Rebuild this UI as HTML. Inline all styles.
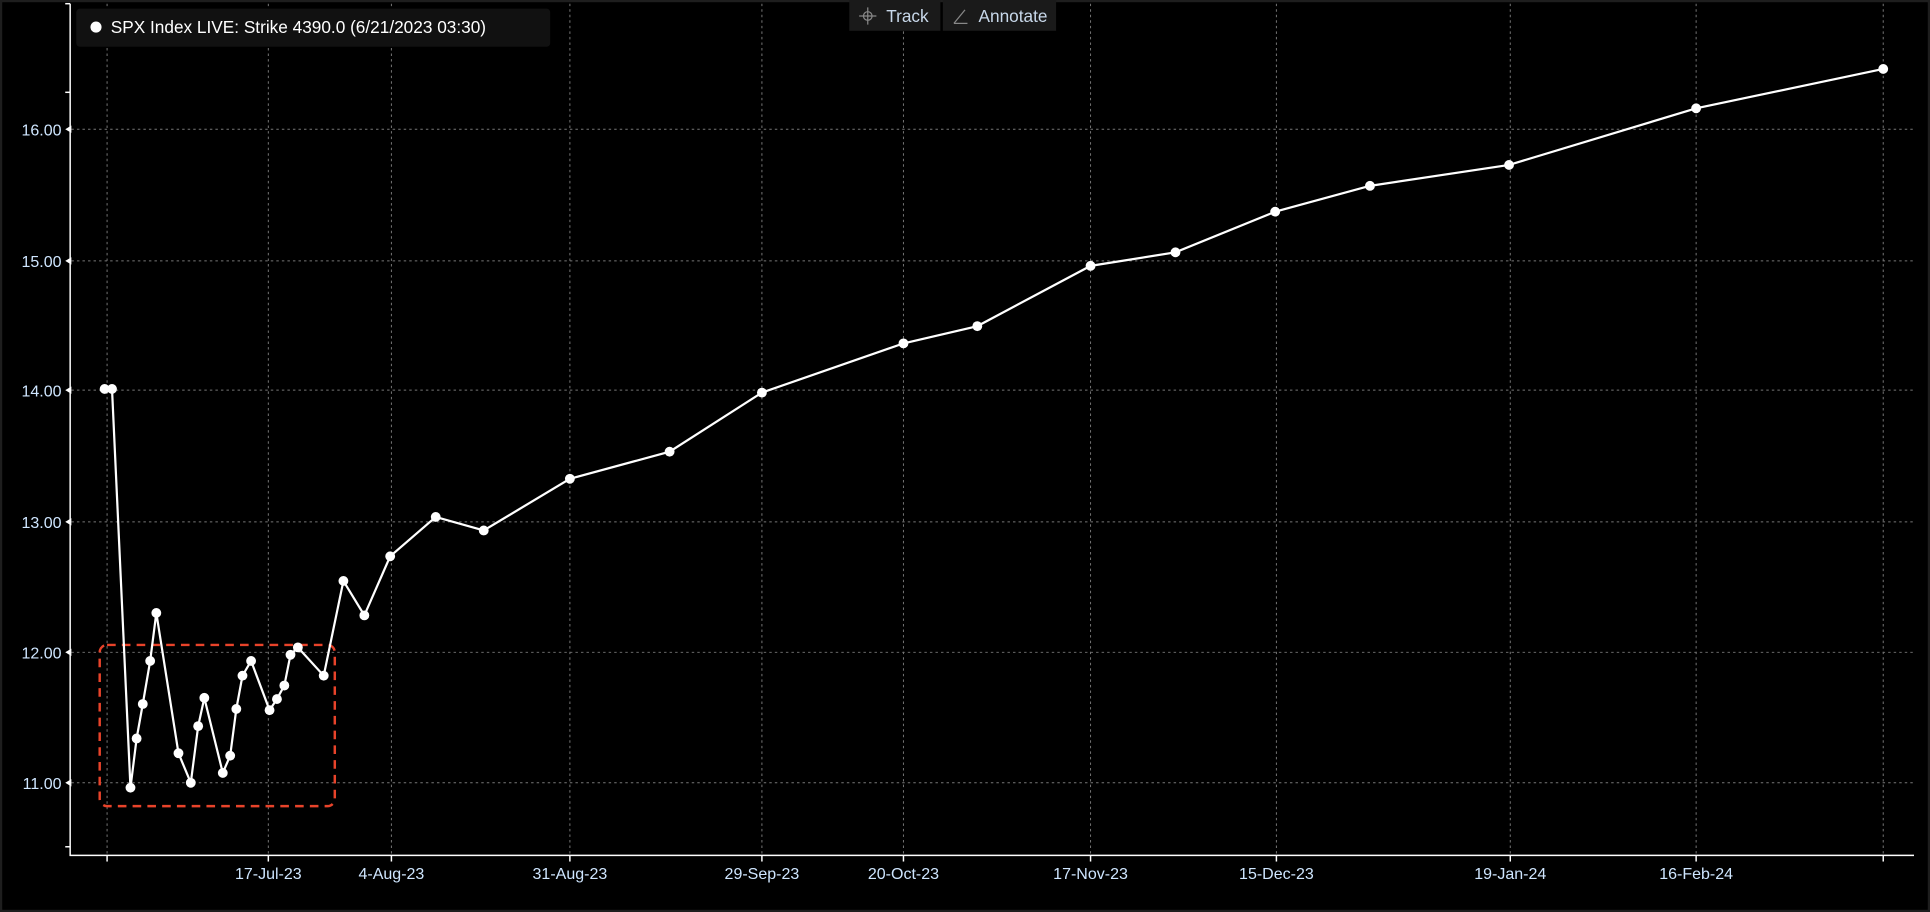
<!DOCTYPE html>
<html><head><meta charset="utf-8"><style>
html,body{margin:0;padding:0;background:#000;width:1930px;height:912px;overflow:hidden}
svg{display:block}
text{font-family:"Liberation Sans Narrow","Liberation Sans",sans-serif}
</style></head><body>
<svg width="1930" height="912" viewBox="0 0 1568 741" preserveAspectRatio="none">
<rect x="0" y="0" width="1568" height="741" fill="#000"/>
<rect x="0.8" y="0.8" width="1566.4" height="739.4" fill="none" stroke="#1e1e1e" stroke-width="2"/>
<g stroke="#777" stroke-width="0.8" stroke-dasharray="2,2.5">
<line x1="58" y1="105" x2="1555" y2="105"/>
<line x1="58" y1="212" x2="1555" y2="212"/>
<line x1="58" y1="317" x2="1555" y2="317"/>
<line x1="58" y1="424" x2="1555" y2="424"/>
<line x1="58" y1="530" x2="1555" y2="530"/>
<line x1="58" y1="636" x2="1555" y2="636"/>
<line x1="87" y1="3" x2="87" y2="695"/>
<line x1="218" y1="3" x2="218" y2="695"/>
<line x1="318" y1="3" x2="318" y2="695"/>
<line x1="463" y1="3" x2="463" y2="695"/>
<line x1="619" y1="3" x2="619" y2="695"/>
<line x1="734" y1="3" x2="734" y2="695"/>
<line x1="886" y1="3" x2="886" y2="695"/>
<line x1="1037" y1="3" x2="1037" y2="695"/>
<line x1="1227" y1="3" x2="1227" y2="695"/>
<line x1="1378" y1="3" x2="1378" y2="695"/>
<line x1="1530" y1="3" x2="1530" y2="695"/>
</g>
<g stroke="#fff" stroke-width="1.2" fill="none">
<polyline points="57,3 57,695 1555,695"/>
<polyline points="53,3 57,3"/><polyline points="53,75 57,75"/><polyline points="53,688 57,688"/>
<polyline points="87,695 87,700"/><polyline points="218,695 218,700"/><polyline points="318,695 318,700"/><polyline points="463,695 463,700"/><polyline points="619,695 619,700"/><polyline points="734,695 734,700"/><polyline points="886,695 886,700"/><polyline points="1037,695 1037,700"/><polyline points="1227,695 1227,700"/><polyline points="1378,695 1378,700"/><polyline points="1530,695 1530,700"/>
</g>
<g fill="#fff">
<polygon points="53,105 58,102 58,108"/><polygon points="53,212 58,209 58,215"/><polygon points="53,317 58,314 58,320"/><polygon points="53,424 58,421 58,427"/><polygon points="53,530 58,527 58,533"/><polygon points="53,636 58,633 58,639"/>
</g>
<g fill="#cfe6ff" font-size="13" text-anchor="end">
<text x="50" y="110">16.00</text><text x="50" y="217">15.00</text><text x="50" y="322">14.00</text><text x="50" y="429">13.00</text><text x="50" y="535">12.00</text><text x="50" y="641">11.00</text>
</g>
<g fill="#cfe6ff" font-size="13" text-anchor="middle">
<text x="218" y="714">17-Jul-23</text><text x="318" y="714">4-Aug-23</text><text x="463" y="714">31-Aug-23</text><text x="619" y="714">29-Sep-23</text><text x="734" y="714">20-Oct-23</text><text x="886" y="714">17-Nov-23</text><text x="1037" y="714">15-Dec-23</text><text x="1227" y="714">19-Jan-24</text><text x="1378" y="714">16-Feb-24</text>
</g>
<rect x="81" y="524" width="191" height="131" rx="6" fill="none" stroke="#e8432a" stroke-width="2" stroke-dasharray="7,5"/>
<polyline fill="none" stroke="#fff" stroke-width="1.8" points="85,316 91,316 106,640 111,600 116,572 122,537 127,498 145,612 155,636 161,590 166,567 181,628 187,614 192,576 197,549 204,537 219,577 225,568 231,557 236,532 242,526 263,549 279,472 296,500 317,452 354,420 393,431 463,389 544,367 619,319 734,279 794,265 886,216 955,205 1036,172 1113,151 1226,134 1378,88 1530,56"/>
<g fill="#fff">
<circle cx="85" cy="316" r="4"/><circle cx="91" cy="316" r="4"/><circle cx="106" cy="640" r="4"/><circle cx="111" cy="600" r="4"/><circle cx="116" cy="572" r="4"/><circle cx="122" cy="537" r="4"/><circle cx="127" cy="498" r="4"/><circle cx="145" cy="612" r="4"/><circle cx="155" cy="636" r="4"/><circle cx="161" cy="590" r="4"/><circle cx="166" cy="567" r="4"/><circle cx="181" cy="628" r="4"/><circle cx="187" cy="614" r="4"/><circle cx="192" cy="576" r="4"/><circle cx="197" cy="549" r="4"/><circle cx="204" cy="537" r="4"/><circle cx="219" cy="577" r="4"/><circle cx="225" cy="568" r="4"/><circle cx="231" cy="557" r="4"/><circle cx="236" cy="532" r="4"/><circle cx="242" cy="526" r="4"/><circle cx="263" cy="549" r="4"/><circle cx="279" cy="472" r="4"/><circle cx="296" cy="500" r="4"/><circle cx="317" cy="452" r="4"/><circle cx="354" cy="420" r="4"/><circle cx="393" cy="431" r="4"/><circle cx="463" cy="389" r="4"/><circle cx="544" cy="367" r="4"/><circle cx="619" cy="319" r="4"/><circle cx="734" cy="279" r="4"/><circle cx="794" cy="265" r="4"/><circle cx="886" cy="216" r="4"/><circle cx="955" cy="205" r="4"/><circle cx="1036" cy="172" r="4"/><circle cx="1113" cy="151" r="4"/><circle cx="1226" cy="134" r="4"/><circle cx="1378" cy="88" r="4"/><circle cx="1530" cy="56" r="4"/>
</g>
<rect x="62" y="7" width="385" height="31" rx="3" fill="#111"/>
<circle cx="78" cy="22" r="4.5" fill="#fff"/>
<text x="90" y="27" fill="#fff" font-size="14">SPX Index LIVE: Strike 4390.0 (6/21/2023 03:30)</text>
<rect x="690" y="0" width="74" height="25" fill="#1a1a1a"/>
<rect x="766" y="0" width="92" height="25" fill="#1a1a1a"/>
<g stroke="#888" stroke-width="1" fill="none"><circle cx="705" cy="13" r="3.5"/><line x1="705" y1="6" x2="705" y2="20"/><line x1="698" y1="13" x2="712" y2="13"/>
<line x1="775" y1="19" x2="784" y2="8"/><line x1="775" y1="19" x2="786" y2="19"/></g>
<text x="720" y="18" fill="#c8d8ea" font-size="14">Track</text>
<text x="795" y="18" fill="#c8d8ea" font-size="14">Annotate</text>
</svg>
</body></html>
